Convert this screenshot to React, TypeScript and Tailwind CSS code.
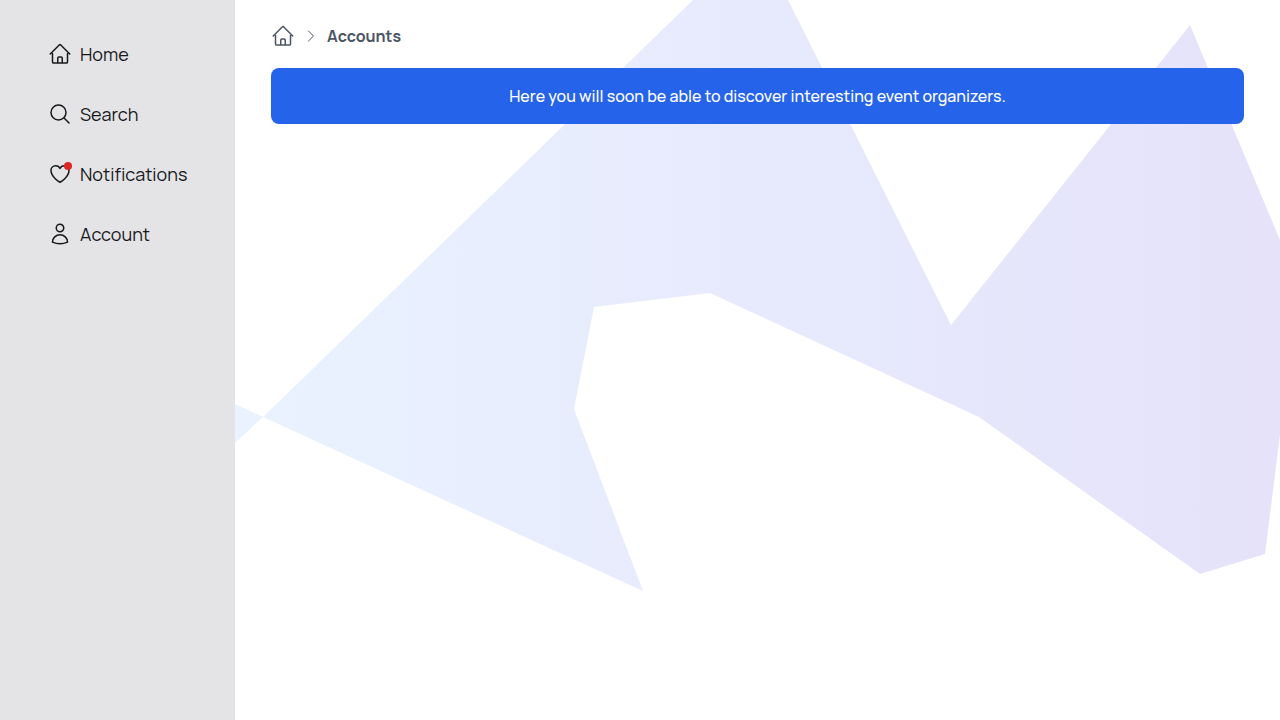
import type { ComponentType } from 'react';
import {
  HiOutlineChevronRight,
  HiOutlineHeart,
  HiOutlineHome,
  HiOutlineMagnifyingGlass,
  HiOutlineUser,
} from 'react-icons/hi2';

type NavItem = {
  label: string;
  icon: ComponentType<{ className?: string }>;
  unread?: boolean;
};

const navItems: NavItem[] = [
  { label: 'Home', icon: HiOutlineHome },
  { label: 'Search', icon: HiOutlineMagnifyingGlass },
  { label: 'Notifications', icon: HiOutlineHeart, unread: true },
  { label: 'Account', icon: HiOutlineUser },
];

function Sidebar() {
  return (
    <aside className="w-[235px] shrink-0 bg-[#e4e4e7] px-12 py-6 text-[#18181b]">
      <nav>
        <ul>
          {navItems.map(({ label, icon: Icon, unread }) => (
            <li key={label}>
              <a href="#" className="flex h-[60px] items-center gap-2 text-lg whitespace-nowrap">
                <span className="relative shrink-0">
                  <Icon className="size-6" />
                  {unread && <span className="absolute top-0 right-0 size-2 rounded-full bg-[#dc2626]" />}
                </span>
                {label}
              </a>
            </li>
          ))}
        </ul>
      </nav>
    </aside>
  );
}

function Backdrop() {
  return (
    <svg
      className="absolute inset-0 size-full"
      viewBox="0 0 1045 720"
      preserveAspectRatio="xMidYMid slice"
      aria-hidden="true"
    >
      <defs>
        <linearGradient id="backdrop" gradientUnits="userSpaceOnUse" x1="0" y1="0" x2="1045" y2="0">
          <stop offset="0" stopColor="#e9f2fe" />
          <stop offset="0.5" stopColor="#e7eafd" />
          <stop offset="1" stopColor="#e5e2f9" />
        </linearGradient>
      </defs>
      <polygon
        fill="url(#backdrop)"
        points="0,404 28,417 408,591 339,409 359,307 475,293 744,417 965,574 1030,554 1045,434 1045,240 955,25 716,325 553,0 458,0 28,417 0,443"
      />
    </svg>
  );
}

export default function App() {
  return (
    <div className="flex min-h-screen bg-white font-['Manrope','Inter',sans-serif]">
      <Sidebar />
      <main className="relative min-w-0 flex-1 overflow-hidden">
        <Backdrop />
        <div className="relative flex flex-col gap-5 px-9 py-6">
          <nav aria-label="Breadcrumb">
            <ol className="flex items-center gap-2 font-bold text-[#4b5563]">
              <li>
                <a href="#" aria-label="Home">
                  <HiOutlineHome className="size-6" />
                </a>
              </li>
              <li className="flex items-center gap-2">
                <HiOutlineChevronRight className="size-4" />
                <a href="#">Accounts</a>
              </li>
            </ol>
          </nav>
          <p className="rounded-lg bg-[#2563eb] p-4 text-center text-base font-medium text-white">
            Here you will soon be able to discover interesting event organizers.
          </p>
        </div>
      </main>
    </div>
  );
}
